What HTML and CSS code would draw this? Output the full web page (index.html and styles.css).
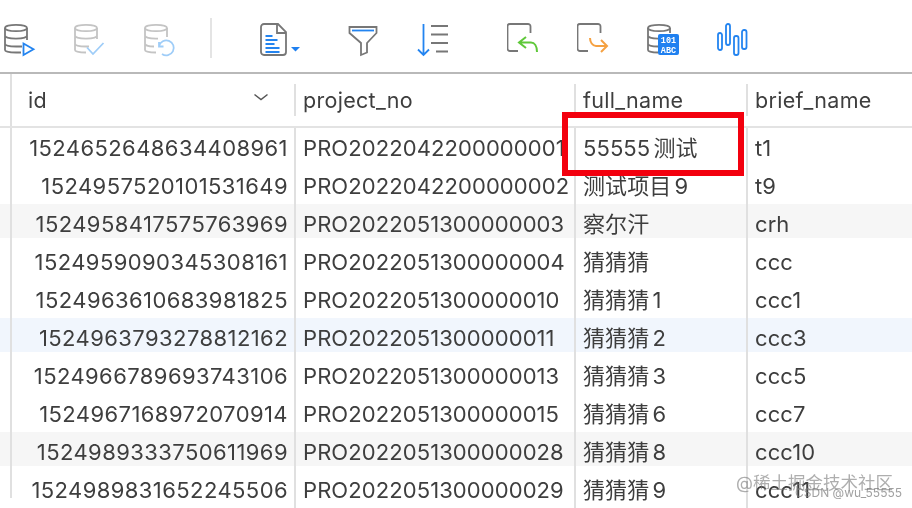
FILE: index.html
```html
<!DOCTYPE html>
<html lang="zh-CN">
<head>
<meta charset="utf-8">
<title>projects</title>
<link rel="stylesheet" href="styles.css">
</head>
<body>
<div class="app">
  <div class="toolbar">
    <svg class="ic first" viewBox="0 0 36 36"><g class="gr"><ellipse cx="12" cy="6" rx="11" ry="3.2"/><path d="M1 6v22c0 1.5 5 2.5 11 2.5h5M23 6v12M1 13.500c0 2 5 3.200 11 3.200s11-1.200 11-3.200M1 21.500c0 2 5 3 11 3h6"/></g><path class="bl" d="M19.500 21.500v11.500l10-5.700z"/></svg>
    <svg class="ic" viewBox="0 0 36 36"><g class="gr faint"><ellipse cx="12" cy="6" rx="11" ry="3.2"/><path d="M1 6v22c0 1.500 5 2.500 11 2.500M23 6v11M1 13.500c0 2 5 3.200 11 3.200s11-1.200 11-3.200M1 21.500c0 2 5 3 11 3h3"/></g><path class="bl faint" d="M13 25.500l6 6.500 10.500-11"/></svg>
    <svg class="ic" viewBox="0 0 36 36"><g class="gr faint"><ellipse cx="12" cy="6" rx="11" ry="3.2"/><path d="M1 6v22c0 1.500 5 2.500 11 2.500M23 6v9M1 13.500c0 2 5 3.200 11 3.200h2M1 21.500c0 2 5 3 9 3"/></g><path class="bl faint" d="M15 24a7.500 7.500 0 1 1 3 8M15 20v4.500h4.500"/></svg>
    <span class="sep"></span>
    <svg class="doc" viewBox="0 0 44 36"><path class="gr" d="M5 2h14l8 8v20a3 3 0 0 1-3 3H5a3 3 0 0 1-3-3V5a3 3 0 0 1 3-3zM18 2v9h9"/><path class="bl thick" d="M6.500 14h7M6.500 18h12M6.500 22h9M6.500 26h14M6.500 30h14"/><path class="fill" d="M32 25h9l-4.500 4.500z"/></svg>
    <svg class="ic filter" viewBox="0 0 36 36"><path class="gr" d="M2.500 5h27v6L20 21v9.500L14 33V21L2.500 11z"/><path class="bl" d="M5 8.500h22"/></svg>
    <svg class="ic" viewBox="0 0 36 36"><path class="bl" d="M6.500 2v31M1 27.500l5.500 5.500 5.500-5.500"/><path class="gr" d="M14 4h17M14 12.500h17M14 21h17M19 29.500h12"/></svg>
    <svg class="ic group" viewBox="0 0 36 36"><path class="gr" d="M11 29H3a2.500 2.500 0 0 1-2.500-2.500v-22A2.500 2.500 0 0 1 3 2h18a2.500 2.500 0 0 1 2.500 2.500V11"/><path class="gr-arrow" d="M19 15l-7 5.500 7 5.500M12 20.500h12c3.500 0 6 3.500 6 9.500"/></svg>
    <svg class="ic" viewBox="0 0 36 36"><path class="gr" d="M11 29H3a2.500 2.500 0 0 1-2.500-2.500v-22A2.500 2.500 0 0 1 3 2h18a2.500 2.500 0 0 1 2.500 2.500V11"/><path class="or-arrow" d="M13 16c0 4 2.500 8 6 8h10M24 18l6 6-6 6"/></svg>
    <svg class="ic" viewBox="0 0 36 36"><g class="gr"><ellipse cx="12" cy="6" rx="11" ry="3.2"/><path d="M1 6v22c0 1.500 5 2.500 10 2.500M23 6v5M1 13.500c0 2 5 3.200 10 3.200M1 21.500c0 2 5 3 10 3"/></g><rect class="fill" x="11" y="12" width="21" height="21" rx="2"/><text class="bits" x="21.500" y="21">101</text><text class="bits" x="21.500" y="30.500">ABC</text></svg>
    <svg class="ic" viewBox="0 0 36 36"><g class="bl"><rect x="1" y="11" width="4" height="17" rx="2"/><rect x="9" y="2" width="4" height="21" rx="2"/><rect x="17" y="14" width="4.500" height="19" rx="2"/><rect x="25" y="8" width="4.500" height="19" rx="2"/></g></svg>
  </div>

  <div class="grid">
    <div class="head">
      <div class="hc hid"><span>id</span><svg class="chev" viewBox="0 0 16 8"><path d="M1.500 1.500L8 6.500l6.500-5"/></svg></div>
      <div class="hc">project_no</div>
      <div class="hc">full_name</div>
      <div class="hc">brief_name</div>
    </div>
    <div class="row"><div class="c id">1524652648634408961</div><div class="c">PRO2022042200000001</div><div class="c">55555 测试</div><div class="c">t1</div></div>
    <div class="row"><div class="c id">1524957520101531649</div><div class="c">PRO2022042200000002</div><div class="c">测试项目 9</div><div class="c">t9</div></div>
    <div class="row gray"><div class="c id">1524958417575763969</div><div class="c">PRO2022051300000003</div><div class="c">察尔汗</div><div class="c">crh</div></div>
    <div class="row"><div class="c id">1524959090345308161</div><div class="c">PRO2022051300000004</div><div class="c">猜猜猜</div><div class="c">ccc</div></div>
    <div class="row"><div class="c id">1524963610683981825</div><div class="c">PRO2022051300000010</div><div class="c">猜猜猜 1</div><div class="c">ccc1</div></div>
    <div class="row blue"><div class="c id">1524963793278812162</div><div class="c">PRO2022051300000011</div><div class="c">猜猜猜 2</div><div class="c">ccc3</div></div>
    <div class="row"><div class="c id">1524966789693743106</div><div class="c">PRO2022051300000013</div><div class="c">猜猜猜 3</div><div class="c">ccc5</div></div>
    <div class="row"><div class="c id">1524967168972070914</div><div class="c">PRO2022051300000015</div><div class="c">猜猜猜 6</div><div class="c">ccc7</div></div>
    <div class="row gray"><div class="c id">1524989333750611969</div><div class="c">PRO2022051300000028</div><div class="c">猜猜猜 8</div><div class="c">ccc10</div></div>
    <div class="row last"><div class="c id">1524989831652245506</div><div class="c">PRO2022051300000029</div><div class="c">猜猜猜 9</div><div class="c">ccc11</div></div>
    <div class="mark"></div>
    <div class="wm1">@稀土掘金技术社区</div>
    <div class="wm2">CSDN @wu_55555</div>
  </div>
</div>
</body>
</html>
```

FILE: styles.css
```css
* { box-sizing: border-box; }
html, body { margin: 0; padding: 0; background: #fff; }
body { width: 912px; height: 508px; overflow: hidden; }
.app {
  width: 912px; height: 508px; overflow: hidden;
  font-family: Inter, "Noto Sans CJK SC", sans-serif;
  color: #3e3e3e;
  filter: blur(0.45px);
}

.toolbar {
  height: 74px;
  border-bottom: 2px solid #b9b9b9;
  padding: 22px 0 0 4px;
  display: flex;
  align-items: flex-start;
}
.ic { width: 36px; height: 36px; margin-left: 34px; flex: none; }
.ic.first { margin-left: 0; }
.ic.filter { margin-left: 44px; }
.ic.group { margin-left: 54px; }
.doc { width: 44px; height: 36px; margin-left: 47px; flex: none; }
.sep { width: 2px; height: 40px; background: #e4e4e4; margin: -4px 0 0 30px; flex: none; }

svg path, svg ellipse, svg rect { fill: none; }
.gr, .gr path, .gr ellipse { stroke: #777; stroke-width: 1.800; }
.gr.faint, .gr.faint path, .gr.faint ellipse { stroke: #c4c4c4; }
.bl, .bl rect { stroke: #2384f0; stroke-width: 1.800; }
.bl.faint { stroke: #9fcdf8; }
.bl.thick { stroke-width: 2; }
svg .fill { fill: #1f80f0; stroke: none; }
.gr-arrow { stroke: #5fc83a; stroke-width: 2; }
.or-arrow { stroke: #f5a142; stroke-width: 2; }
.bits { fill: #fff; font: 700 8.500px "Liberation Mono", monospace; text-anchor: middle; }

.grid { position: relative; height: 434px; }
.head {
  height: 54px;
  border-bottom: 2px solid #e3e3e3;
  display: grid;
  grid-template-columns: 284px 280px 172px 1fr;
  padding-left: 10px;
  font-size: 21.500px;
  letter-spacing: 0.3px;
  align-items: start;
}
.hc {
  margin-top: 10px;
  height: 32px;
  line-height: 32px;
  padding-left: 7px;
  border-left: 2px solid #e0e0e0;
}
.hc.hid {
  margin-top: 0;
  height: 52px;
  line-height: 52px;
  padding: 0 25px 0 16px;
  display: flex;
  justify-content: space-between;
}
.chev { width: 16px; height: 8px; margin-top: 19px; }
.chev path { stroke: #555; stroke-width: 1.500; }

.row {
  height: 38px;
  padding-left: 10px;
  display: grid;
  grid-template-columns: 284px 280px 172px 1fr;
  font-size: 22px;
  letter-spacing: 0.08px;
}
.row.gray { background: linear-gradient(#f6f6f6, #f6f6f6) no-repeat 0 0 / 100% 34px; }
.row.blue { background: linear-gradient(#f1f6fd, #f1f6fd) no-repeat 0 0 / 100% 34px; }
.c {
  border-left: 2px solid #e0e0e0;
  padding: 4px 0 0 7px;
  line-height: 32px;
  white-space: nowrap;
  word-spacing: -3px;
}
.c.id { text-align: right; padding: 4px 6px 0 0; letter-spacing: 0.42px; }
.row.last .c.id { height: 28px; }

.mark {
  position: absolute;
  left: 562px; top: 38px;
  width: 182px; height: 64px;
  border: 6px solid #f3000e;
}
.wm1 {
  position: absolute; left: 736px; top: 397px;
  font-size: 17.500px; line-height: 24px; color: rgba(120,120,120,.6);
  white-space: nowrap;
}
.wm2 {
  position: absolute; left: 795px; top: 411px;
  font-size: 12px; line-height: 16px; color: rgba(120,120,120,.7);
  white-space: nowrap;
}
```
